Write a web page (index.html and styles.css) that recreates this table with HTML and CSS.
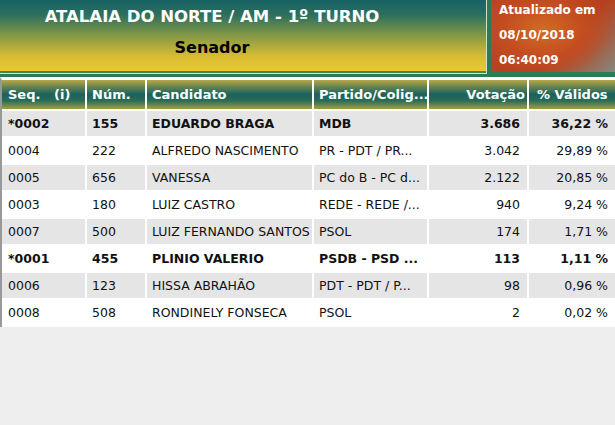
FILE: index.html
```html
<!DOCTYPE html>
<html lang="pt">
<head>
<meta charset="utf-8">
<title>Atalaia do Norte - Senador</title>
<link rel="stylesheet" href="styles.css">
</head>
<body>
<header class="band">
  <div class="title-box">
    <div class="title">ATALAIA DO NORTE / AM - 1º TURNO</div>
    <div class="subtitle">Senador</div>
  </div>
  <div class="update-box">
    <div>Atualizado em</div>
    <div>08/10/2018</div>
    <div>06:40:09</div>
  </div>
</header>
<table class="results">
  <thead>
    <tr>
      <th class="c-seq">Seq.&nbsp;&nbsp;&nbsp;(i)</th>
      <th class="c-num">Núm.</th>
      <th class="c-cand">Candidato</th>
      <th class="c-part">Partido/Colig...</th>
      <th class="c-vot">Votação</th>
      <th class="c-pct">% Válidos</th>
    </tr>
  </thead>
  <tbody>
    <tr class="odd elected"><td>*0002</td><td>155</td><td>EDUARDO BRAGA</td><td>MDB</td><td class="r">3.686</td><td class="r">36,22 %</td></tr>
    <tr><td>0004</td><td>222</td><td>ALFREDO NASCIMENTO</td><td>PR - PDT / PR...</td><td class="r">3.042</td><td class="r">29,89 %</td></tr>
    <tr class="odd"><td>0005</td><td>656</td><td>VANESSA</td><td>PC do B - PC d...</td><td class="r">2.122</td><td class="r">20,85 %</td></tr>
    <tr><td>0003</td><td>180</td><td>LUIZ CASTRO</td><td>REDE - REDE /...</td><td class="r">940</td><td class="r">9,24 %</td></tr>
    <tr class="odd"><td>0007</td><td>500</td><td>LUIZ FERNANDO SANTOS</td><td>PSOL</td><td class="r">174</td><td class="r">1,71 %</td></tr>
    <tr class="elected"><td>*0001</td><td>455</td><td>PLINIO VALERIO</td><td>PSDB - PSD ...</td><td class="r">113</td><td class="r">1,11 %</td></tr>
    <tr class="odd"><td>0006</td><td>123</td><td>HISSA ABRAHÃO</td><td>PDT - PDT / P...</td><td class="r">98</td><td class="r">0,96 %</td></tr>
    <tr><td>0008</td><td>508</td><td>RONDINELY FONSECA</td><td>PSOL</td><td class="r">2</td><td class="r">0,02 %</td></tr>
  </tbody>
</table>
</body>
</html>
```
FILE: styles.css
```css
* { box-sizing: border-box; }
html, body {
  margin: 0;
  padding: 0;
}
body {
  background: #eeeeee;
  font-family: "DejaVu Sans", Verdana, sans-serif;
  color: #111;
  overflow: hidden;
}
.band {
  display: flex;
  height: 77px;
  background: #2e7a56;
}
.title-box {
  width: 487px;
  height: 74px;
  padding-right: 62px;
  text-align: center;
  font-weight: bold;
  background: linear-gradient(to bottom, #196366 0%, #2c6e5d 20%, #889a44 50%, #d4bb34 76%, #f3c92c 100%);
  border-right: 1px solid #cfe4c4;
  border-bottom: 1px solid #cfe4c4;
  box-shadow: inset 0 -2px 0 #3f8a4c;
}
.title {
  padding-top: 7px;
  font-size: 16.5px;
  line-height: 20px;
  color: #fff;
}
.subtitle {
  margin-top: 11px;
  font-size: 16px;
  line-height: 20px;
  color: #000;
}
.update-box {
  margin-left: 4px;
  flex: 1;
  height: 72px;
  padding: 0 0 0 8px;
  font-size: 12px;
  font-weight: bold;
  line-height: 25px;
  color: #fff;
  background:
    radial-gradient(ellipse 70% 80% at 42% 42%, #cf6d24 0%, #c44d20 45%, rgba(185,64,32,0) 80%),
    linear-gradient(135deg, #bd4320 0%, #b6411f 60%, #9a6a55 85%, #868a80 100%);
}
.update-box div:first-child { margin-top: -2px; }

.results {
  width: 615px;
  table-layout: fixed;
  border-collapse: separate;
  border-spacing: 0;
  background: #fff;
  border-left: 2px solid #999;
  border-top: 3px solid #fff;
}
.results th,
.results td {
  border-right: 2px solid #fff;
  border-bottom: 2px solid #fff;
  padding: 0 5px;
  white-space: nowrap;
  overflow: hidden;
  text-align: left;
}
.results th:last-child,
.results td:last-child { border-right: 0; }
.results th {
  height: 31px;
  font-size: 13px;
  font-weight: bold;
  color: #fff;
  background: linear-gradient(to bottom, #b9a846 0%, #6a8650 22%, #1a625d 50%, #2c6c58 72%, #a29f46 100%);
}
.results td {
  height: 27px;
  font-size: 12.5px;
}
.c-seq { width: 85px; }
.c-num { width: 60px; }
.c-cand { width: 167px; }
.c-part { width: 115px; }
.c-vot { width: 100px; }
.c-pct { width: 86px; }
.results th.c-seq, .results td:first-child { padding-left: 6px; }
.results th.c-vot { text-align: right; padding-right: 2px; }
.results th.c-pct { padding-left: 8px; padding-right: 0; overflow: visible; }
.results td.r { text-align: right; padding-right: 7px; }
.odd td { background: #e5e5e5; }
.elected td { font-weight: bold; }
```
